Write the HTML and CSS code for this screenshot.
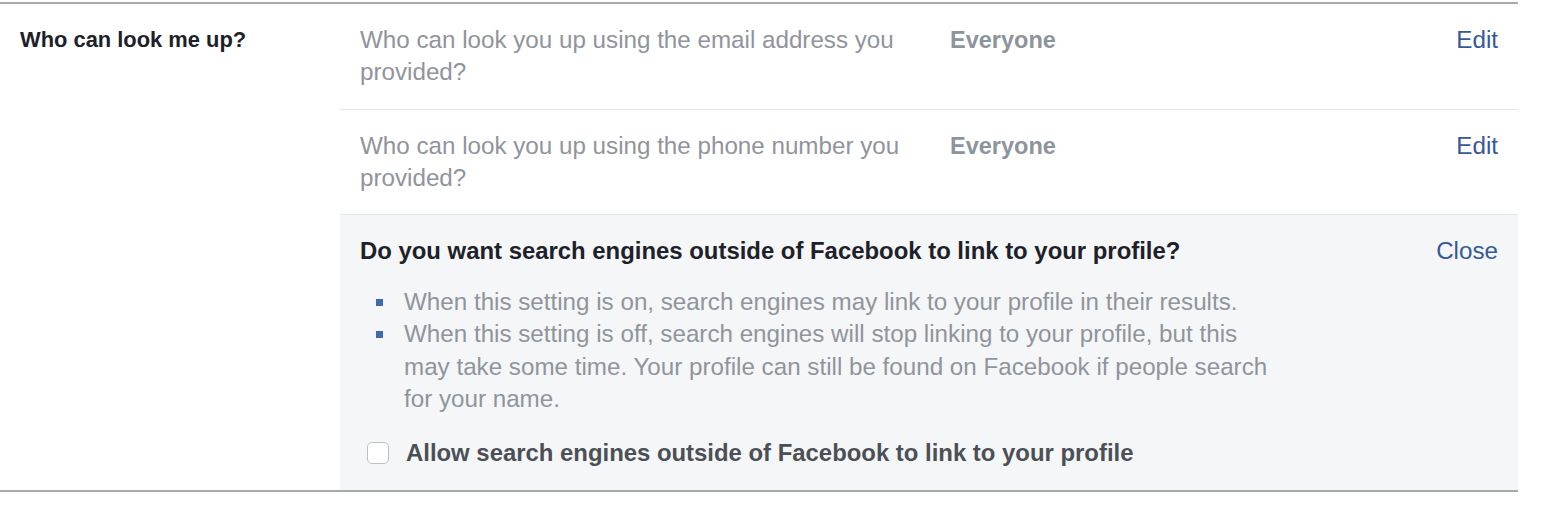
FILE: index.html
```html
<!DOCTYPE html>
<html>
<head>
<meta charset="utf-8">
<link rel="stylesheet" href="styles.css">
</head>
<body>
<div class="section">
  <div class="label">Who can look me up?</div>
  <div class="rows">
    <div class="row row-first">
      <div class="desc">Who can look you up using the email address you provided?</div>
      <div class="value">Everyone</div>
      <a class="link">Edit</a>
    </div>
    <div class="row">
      <div class="desc">Who can look you up using the phone number you provided?</div>
      <div class="value">Everyone</div>
      <a class="link">Edit</a>
    </div>
    <div class="panel">
      <div class="panel-head">
        <div class="panel-title">Do you want search engines outside of Facebook to link to your profile?</div>
        <a class="link">Close</a>
      </div>
      <ul class="bullets">
        <li>When this setting is on, search engines may link to your profile in their results.</li>
        <li>When this setting is off, search engines will stop linking to your profile, but this may take some time. Your profile can still be found on Facebook if people search for your name.</li>
      </ul>
      <label class="check">
        <span class="box"></span>
        <span class="check-text">Allow search engines outside of Facebook to link to your profile</span>
      </label>
    </div>
  </div>
</div>
</body>
</html>
```

FILE: styles.css
```css
html, body {
  margin: 0;
  padding: 0;
  background: #ffffff;
}
body {
  padding-top: 2px;
  font-family: "Liberation Sans", Arial, Helvetica, sans-serif;
  font-size: 24.2px;
  line-height: 32px;
  color: #90949c;
}
.section {
  width: 1518px;
  display: flex;
  border-top: 2px solid #a9a9a9;
  border-bottom: 2px solid #a9a9a9;
}
.label {
  width: 340px;
  box-sizing: border-box;
  padding: 20px 20px;
  font-weight: bold;
  font-size: 21.9px;
  color: #1d2129;
  flex-shrink: 0;
}
.rows {
  flex: 1;
  display: flex;
  flex-direction: column;
}
.row {
  display: flex;
  padding: 20px 20px 20px 20px;
  border-bottom: 1px solid #e5e6e9;
}
.row-first {
  padding-bottom: 21px;
}
.desc {
  width: 570px;
  flex-shrink: 0;
}
.value {
  flex: 1;
  margin-left: 20px;
  font-weight: bold;
  font-size: 23.5px;
  color: #8d949e;
}
.link {
  color: #365899;
  cursor: pointer;
}
.panel {
  background: #f5f6f7;
  padding: 20px 20px 21px 20px;
}
.panel-head {
  display: flex;
  justify-content: space-between;
}
.panel-title {
  font-weight: bold;
  font-size: 23.9px;
  color: #1d2129;
}
.bullets {
  list-style: none;
  margin: 19px 0 0 0;
  padding: 0;
  width: 922px;
}
.bullets li {
  position: relative;
  padding-left: 44px;
  line-height: 32.3px;
}
.bullets li::before {
  content: "";
  position: absolute;
  left: 16px;
  top: 13px;
  width: 7px;
  height: 7px;
  background: #4267b2;
}
.check {
  display: flex;
  align-items: center;
  margin-top: 22px;
  padding-left: 7px;
}
.box {
  width: 20px;
  height: 20px;
  border: 1px solid #bcc0c6;
  border-radius: 5px;
  background: #ffffff;
  flex-shrink: 0;
}
.check-text {
  margin-left: 17px;
  font-weight: bold;
  font-size: 23.9px;
  color: #4b4f56;
}
```
